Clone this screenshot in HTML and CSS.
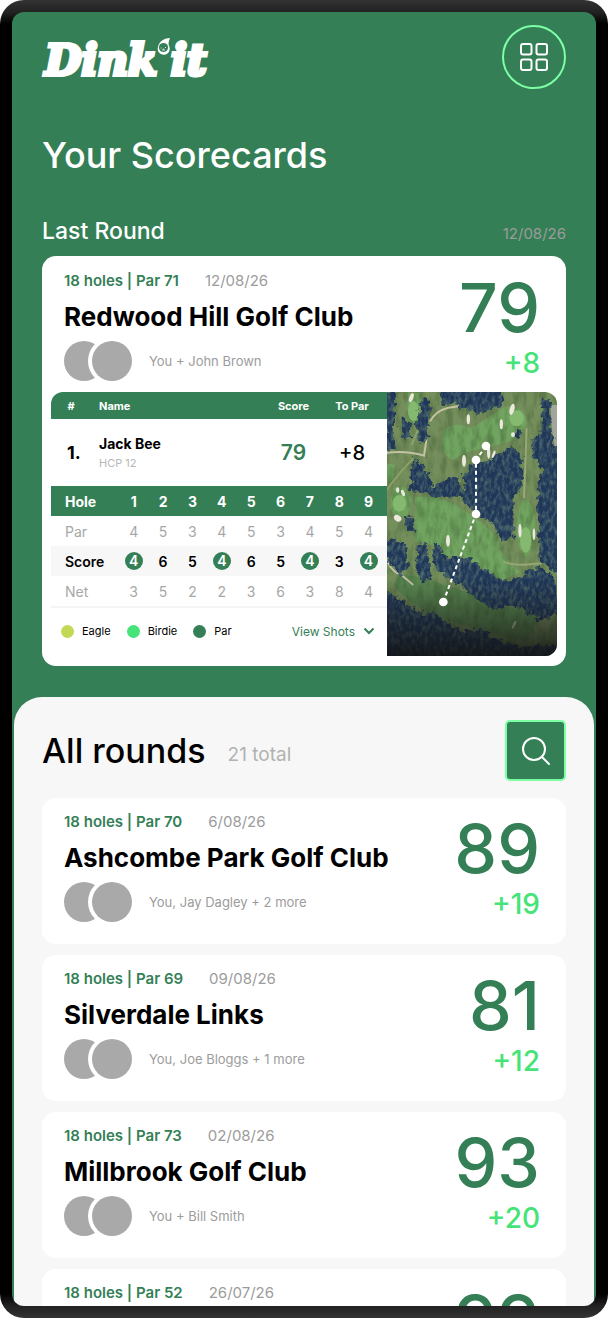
FILE: index.html
```
<!DOCTYPE html>
<html lang="en">
<head>
    <meta charset="UTF-8">
    <meta name="viewport" content="width=device-width, initial-scale=1.0">
    <title>Dink it - Your Scorecards</title>
    <link rel="stylesheet" href="styles.css">
</head>
<body>
    <div class="device">
        <div class="screen">
            <header class="top-bar">
                <a href="#" class="logo">
                    <span>Dink</span>
                    <svg class="logo-ball" viewBox="0 0 14 18" aria-hidden="true">
                        <path d="M13 1 C8 1 2 4 1 10 A6 6 0 1 0 12 9 C11 6 12 4 13 1 Z" fill="#fff"/>
                        <circle cx="6.5" cy="10.5" r="4.6" fill="#347f56"/>
                        <path d="M4 10.5 v1 M6.5 11.5 v1 M8.5 10 v1 M5 13 h3" stroke="#fff" stroke-width="0.8" fill="none"/>
                    </svg>
                    <span>it</span>
                </a>
                <button type="button" class="menu-btn" aria-label="Menu">
                    <svg width="30" height="30" viewBox="0 0 30 30" fill="none" stroke="#fff" stroke-width="2">
                        <rect x="2" y="2" width="10.5" height="10.5" rx="2"/>
                        <rect x="17.5" y="2" width="10.5" height="10.5" rx="2"/>
                        <rect x="2" y="17.5" width="10.5" height="10.5" rx="2"/>
                        <rect x="17.5" y="17.5" width="10.5" height="10.5" rx="2"/>
                    </svg>
                </button>
            </header>

            <main>
                <h1>Your Scorecards</h1>

                <section class="last-round">
                    <div class="section-head">
                        <h2>Last Round</h2>
                        <span class="date">12/08/26</span>
                    </div>

                    <article class="card featured">
                        <div class="round">
                            <div class="round-info">
                                <p class="meta"><strong>18 holes | Par 71</strong><span class="date">12/08/26</span></p>
                                <h3>Redwood Hill Golf Club</h3>
                                <div class="players">
                                    <span class="avatar"></span><span class="avatar"></span>
                                    <span class="names">You + John Brown</span>
                                </div>
                            </div>
                            <div class="round-score">
                                <span class="total">79</span>
                                <span class="to-par">+8</span>
                            </div>
                        </div>

                        <div class="scorecard">
                            <div class="scores">
                                <table class="leaderboard">
                                    <thead>
                                        <tr><th class="pos">#</th><th class="name">Name</th><th class="score">Score</th><th class="par">To Par</th></tr>
                                    </thead>
                                    <tbody>
                                        <tr>
                                            <td class="pos">1.</td>
                                            <td class="name">Jack Bee<small>HCP 12</small></td>
                                            <td class="score">79</td>
                                            <td class="par">+8</td>
                                        </tr>
                                    </tbody>
                                </table>

                                <table class="holes">
                                    <thead>
                                        <tr><th>Hole</th><th>1</th><th>2</th><th>3</th><th>4</th><th>5</th><th>6</th><th>7</th><th>8</th><th>9</th></tr>
                                    </thead>
                                    <tbody>
                                        <tr><th>Par</th><td>4</td><td>5</td><td>3</td><td>4</td><td>5</td><td>3</td><td>4</td><td>5</td><td>4</td></tr>
                                        <tr class="played"><th>Score</th><td><b>4</b></td><td>6</td><td>5</td><td><b>4</b></td><td>6</td><td>5</td><td><b>4</b></td><td>3</td><td><b>4</b></td></tr>
                                        <tr><th>Net</th><td>3</td><td>5</td><td>2</td><td>2</td><td>3</td><td>6</td><td>3</td><td>8</td><td>4</td></tr>
                                    </tbody>
                                </table>

                                <div class="legend">
                                    <span class="key eagle">Eagle</span>
                                    <span class="key birdie">Birdie</span>
                                    <span class="key on-par">Par</span>
                                    <a href="#" class="view-shots">View Shots
                                        <svg width="12" height="8" viewBox="0 0 12 8" fill="none" stroke="currentColor" stroke-width="2"><path d="M1.5 1.5 L6 6 L10.5 1.5"/></svg>
                                    </a>
                                </div>
                            </div>

                            <!-- aerial view of the hole with the shots played -->
                            <svg class="course-map" viewBox="20 21 512 792" preserveAspectRatio="xMidYMid slice" role="img" aria-label="Shot map">
                                <defs>
                                    <filter id="trees" x="-5%" y="-5%" width="110%" height="110%" color-interpolation-filters="sRGB">
                                        <feTurbulence type="fractalNoise" baseFrequency="0.06" numOctaves="3" seed="4" result="n"/>
                                        <feDisplacementMap in="SourceGraphic" in2="n" scale="30" xChannelSelector="R" yChannelSelector="G" result="shape"/>
                                        <feTurbulence type="fractalNoise" baseFrequency="0.09 0.05" numOctaves="3" seed="9"/>
                                        <feColorMatrix values="0 0 0 0 0.34  0 0 0 0 0.46  0 0 0 0 0.44  2 0 0 0 -0.8" result="leaf"/>
                                        <feComposite in="leaf" in2="shape" operator="in" result="lit"/>
                                        <feMerge><feMergeNode in="shape"/><feMergeNode in="lit"/></feMerge>
                                    </filter>
                                    <filter id="grass" x="0" y="0" width="100%" height="100%" color-interpolation-filters="sRGB">
                                        <feTurbulence type="fractalNoise" baseFrequency="0.05 0.02" numOctaves="4" seed="2"/>
                                        <feColorMatrix values="0 0 0 0 0.25  0 0 0 0 0.36  0 0 0 0 0.2  2.4 0 0 0 -0.95"/>
                                    </filter>
                                    <linearGradient id="shade" x1="0" y1="0" x2="0" y2="1">
                                        <stop offset="0.7" stop-color="#111" stop-opacity="0"/>
                                        <stop offset="1" stop-color="#111" stop-opacity="0.85"/>
                                    </linearGradient>
                                </defs>
                                <rect x="20" y="21" width="512" height="792" fill="#758f5c"/>
                                <g fill="#70a460">
                                    <path d="M85 25 L120 25 Q125 80 110 110 Q90 125 82 95 Z"/>
                                    <path d="M190 140 Q215 105 270 130 Q340 90 375 65 Q430 55 440 110 Q430 160 370 175 L310 190 Q250 200 220 225 Q180 215 190 140 Z"/>
                                    <path d="M40 310 Q85 290 95 350 Q90 395 60 400 Q30 390 32 345 Z"/>
                                    <path d="M105 335 Q190 330 240 370 Q330 420 355 470 Q375 530 420 560 L360 590 Q290 520 190 510 Q150 465 105 470 Z"/>
                                    <path d="M425 345 Q465 340 465 430 Q460 510 435 515 Q405 480 412 400 Z"/>
                                    <path d="M20 235 L45 240 L42 280 L20 295 Z"/>
                                    <path d="M60 570 Q130 570 190 600 Q280 620 340 670 Q440 650 470 710 L440 770 Q300 740 190 700 Q100 670 40 600 Z" fill="#5c8a53"/>
                                </g>
                                <rect x="20" y="21" width="512" height="792" filter="url(#grass)" opacity="0.45"/>
                                <g fill="#85b96f">
                                    <ellipse cx="100" cy="78" rx="16" ry="30"/>
                                    <ellipse cx="410" cy="100" rx="22" ry="24"/>
                                    <ellipse cx="58" cy="355" rx="20" ry="25"/>
                                    <ellipse cx="437" cy="465" rx="17" ry="38"/>
                                    <ellipse cx="420" cy="740" rx="20" ry="16" fill="#5d8a50"/>
                                </g>
                                <g stroke="#c3c3a4" fill="none" stroke-width="6">
                                    <path d="M20 203 Q80 196 132 212 L140 160"/>
                                    <path d="M150 110 Q165 78 205 68 L245 62"/>
                                    <path d="M20 528 Q40 565 62 568 L100 600"/>
                                    <path d="M20 315 Q60 260 100 220 M95 180 L120 120" stroke="#8ba16a"/>
                                    <path d="M370 530 Q400 545 485 535 M440 130 L432 340" stroke="#96a876"/>
                                </g>
                                <path d="M512 60 L532 60 L532 210 Q515 170 512 60 Z" fill="#a3a49a"/>
                                <g fill="#20375a" filter="url(#trees)">
                                    <path d="M10 20 H45 V190 L20 195 Z"/>
                                    <path d="M125 45 L150 40 L145 160 L115 175 L108 120 Z"/>
                                    <path d="M65 90 L95 120 L90 165 L65 155 Z"/>
                                    <path d="M175 10 H365 L370 55 L310 85 L250 75 L225 55 L190 60 Z"/>
                                    <path d="M100 215 L145 260 L160 305 L235 270 L250 340 L165 335 L90 315 Z"/>
                                    <path d="M275 235 L325 225 L400 185 L428 215 L425 300 L400 345 L400 460 L365 470 L340 420 L290 385 L250 350 L250 270 Z"/>
                                    <path d="M410 130 l14 8 l-4 22 l-16 -5 Z"/>
                                    <path d="M485 40 L510 45 L512 140 L540 210 L540 570 L480 530 L470 340 L485 250 L455 215 L455 165 L485 145 Z"/>
                                    <path d="M78 400 L100 398 L104 440 L82 448 Z"/>
                                    <path d="M20 460 L75 475 L85 550 L60 570 L20 525 Z"/>
                                    <path d="M110 475 L140 480 L155 585 L130 590 L110 560 Z"/>
                                    <path d="M155 475 L178 485 L200 515 L270 520 L320 560 L370 590 L430 570 L475 545 L520 570 L540 690 L480 705 L440 680 L395 655 L350 680 L290 640 L240 600 L195 570 L165 545 Z"/>
                                    <path d="M10 615 L60 640 L130 690 L160 680 L210 720 L260 740 L300 730 L330 755 L420 785 L540 780 L540 830 L10 830 Z"/>
                                </g>
                                <g fill="#ece9dc">
                                    <ellipse cx="94" cy="38" rx="6" ry="14" transform="rotate(20 94 38)"/>
                                    <ellipse cx="265" cy="103" rx="5" ry="15"/>
                                    <ellipse cx="396" cy="73" rx="7" ry="17" transform="rotate(15 396 73)"/>
                                    <ellipse cx="364" cy="118" rx="5" ry="15"/>
                                    <ellipse cx="399" cy="149" rx="6" ry="7"/>
                                    <ellipse cx="252" cy="227" rx="6" ry="18"/>
                                    <ellipse cx="326" cy="203" rx="5" ry="18"/>
                                    <ellipse cx="341" cy="208" rx="4" ry="12" transform="rotate(20 341 208)"/>
                                    <ellipse cx="53" cy="315" rx="5" ry="8"/>
                                    <ellipse cx="69" cy="324" rx="5" ry="10" transform="rotate(-20 69 324)"/>
                                    <ellipse cx="53" cy="400" rx="12" ry="9" transform="rotate(30 53 400)"/>
                                    <ellipse cx="204" cy="467" rx="6" ry="18"/>
                                    <ellipse cx="420" cy="437" rx="5" ry="21"/>
                                    <ellipse cx="462" cy="448" rx="4" ry="18"/>
                                    <ellipse cx="402" cy="720" rx="4" ry="13" transform="rotate(25 402 720)" opacity="0.6"/>
                                </g>
                                <rect x="20" y="21" width="512" height="792" fill="url(#shade)"/>
                                <path d="M190 651 L288 387 L288 225 L318 183" fill="none" stroke="#fff" stroke-width="6" stroke-dasharray="12 9"/>
                                <g fill="#fff">
                                    <circle cx="318" cy="183" r="13"/>
                                    <circle cx="288" cy="225" r="13"/>
                                    <circle cx="288" cy="387" r="13"/>
                                    <circle cx="190" cy="651" r="13"/>
                                </g>
                            </svg>
                        </div>
                    </article>
                </section>

                <section class="all-rounds">
                    <div class="all-head">
                        <h2>All rounds</h2>
                        <span class="count">21 total</span>
                        <button type="button" class="search-btn" aria-label="Search rounds">
                            <svg width="30" height="30" viewBox="0 0 30 30" fill="none" stroke="#fff" stroke-width="2" stroke-linecap="round">
                                <circle cx="13" cy="13" r="11"/>
                                <path d="M21 21 L28 28"/>
                            </svg>
                        </button>
                    </div>

                    <article class="card round">
                        <div class="round-info">
                            <p class="meta"><strong>18 holes | Par 70</strong><span class="date">6/08/26</span></p>
                            <h3>Ashcombe Park Golf Club</h3>
                            <div class="players">
                                <span class="avatar"></span><span class="avatar"></span>
                                <span class="names">You, Jay Dagley + 2 more</span>
                            </div>
                        </div>
                        <div class="round-score">
                            <span class="total">89</span>
                            <span class="to-par">+19</span>
                        </div>
                    </article>

                    <article class="card round">
                        <div class="round-info">
                            <p class="meta"><strong>18 holes | Par 69</strong><span class="date">09/08/26</span></p>
                            <h3>Silverdale Links</h3>
                            <div class="players">
                                <span class="avatar"></span><span class="avatar"></span>
                                <span class="names">You, Joe Bloggs + 1 more</span>
                            </div>
                        </div>
                        <div class="round-score">
                            <span class="total">81</span>
                            <span class="to-par">+12</span>
                        </div>
                    </article>

                    <article class="card round">
                        <div class="round-info">
                            <p class="meta"><strong>18 holes | Par 73</strong><span class="date">02/08/26</span></p>
                            <h3>Millbrook Golf Club</h3>
                            <div class="players">
                                <span class="avatar"></span><span class="avatar"></span>
                                <span class="names">You + Bill Smith</span>
                            </div>
                        </div>
                        <div class="round-score">
                            <span class="total">93</span>
                            <span class="to-par">+20</span>
                        </div>
                    </article>

                    <article class="card round">
                        <div class="round-info">
                            <p class="meta"><strong>18 holes | Par 52</strong><span class="date">26/07/26</span></p>
                        </div>
                        <div class="round-score">
                            <span class="total">99</span>
                        </div>
                    </article>
                </section>
            </main>
        </div>
    </div>
</body>
</html>
```
FILE: styles.css
```
* {
    box-sizing: border-box;
}
body {
    margin: 0;
    background: #fff;
    color: #000;
    font-family: Inter, "Liberation Sans", sans-serif;
}
h1, h2, h3, p {
    margin: 0;
}
button {
    padding: 0;
    cursor: pointer;
}
svg {
    display: block;
}

/* phone frame */
.device {
    height: 100vh;
    padding: 12px;
    border-radius: 24px;
    background: linear-gradient(#333 0, #222 12px, #000 24px, #000 calc(100% - 24px), #222 calc(100% - 12px), #333 100%);
}
.screen {
    height: 100%;
    overflow-y: auto;
    scrollbar-width: none;
    border-radius: 12px;
    background: #347f56;
}

/* header */
.top-bar {
    display: flex;
    justify-content: space-between;
    align-items: center;
    padding: 13px 30px 0;
}
.logo {
    display: flex;
    padding: 8px 0 0 3px;
    color: #fff;
    font-family: "DejaVu Serif", serif;
    font-size: 42px;
    font-weight: bold;
    font-style: italic;
    line-height: 48px;
    text-decoration: none;
    -webkit-text-stroke: 4px #fff;
    paint-order: stroke;
}
.logo-ball {
    width: 14px;
    height: 18px;
}
.menu-btn {
    display: flex;
    justify-content: center;
    align-items: center;
    width: 64px;
    height: 64px;
    border: 2px solid #7dffa6;
    border-radius: 50%;
    background: none;
}
h1 {
    margin-top: 46px;
    padding: 0 30px;
    color: #fff;
    font-size: 36px;
    font-weight: 500;
    line-height: 40px;
}
.last-round {
    padding: 42px 30px 0;
}
.section-head {
    display: flex;
    justify-content: space-between;
    align-items: baseline;
    margin-bottom: 11px;
    color: #fff;
}
.section-head h2 {
    font-size: 23px;
    font-weight: 500;
    line-height: 28px;
}
.date {
    color: #9c9c9c;
    font-size: 15px;
    font-weight: 400;
}

/* round cards */
.card {
    border-radius: 14px;
    background: #fff;
}
.round {
    display: flex;
    justify-content: space-between;
    padding: 14px 26px 0 22px;
}
.meta {
    display: flex;
    gap: 26px;
    font-size: 15px;
    line-height: 20px;
}
.meta strong {
    color: #347f56;
    font-weight: 600;
}
h3 {
    margin-top: 10px;
    font-size: 26px;
    font-weight: 700;
    line-height: 32px;
}
.players {
    display: flex;
    align-items: center;
    margin-top: 8px;
}
.avatar {
    width: 40px;
    height: 40px;
    border-radius: 50%;
    background: #a9a9a9;
}
.avatar + .avatar {
    margin-left: -12px;
    box-shadow: 0 0 0 4px #fff;
}
.names {
    margin-left: 17px;
    color: #9c9c9c;
    font-size: 13px;
    font-weight: 400;
}
.round-score {
    display: flex;
    flex-direction: column;
    align-items: flex-end;
}
.total {
    color: #347f56;
    font-size: 68px;
    font-weight: 500;
    line-height: 72px;
}
.to-par {
    color: #45e378;
    font-size: 28px;
    font-weight: 500;
    line-height: 40px;
}

/* last round scorecard */
.featured {
    padding-bottom: 10px;
}
.featured .round {
    padding-top: 15px;
}
.scorecard {
    display: grid;
    grid-template-columns: 336fr 170fr;
    margin: 9px 9px 0;
    overflow: hidden;
    border-radius: 12px;
}
.course-map {
    width: 100%;
    height: 264px;
}
table {
    width: 100%;
    border-collapse: collapse;
    table-layout: fixed;
}
th, td {
    padding: 0;
    text-align: center;
}
thead {
    background: #347f56;
    color: #fff;
}
.leaderboard th {
    height: 27px;
    font-size: 11px;
    font-weight: 700;
}
.leaderboard td {
    height: 67px;
    font-size: 20px;
    font-weight: 500;
}
.leaderboard .pos {
    width: 40px;
}
.leaderboard td.pos {
    padding-left: 6px;
    font-size: 18px;
    font-weight: 700;
}
.leaderboard .name {
    padding-left: 8px;
    text-align: left;
}
.leaderboard td.name {
    font-size: 14px;
    font-weight: 700;
}
.leaderboard small {
    display: block;
    margin-top: 4px;
    color: #b5b8b6;
    font-size: 11px;
    font-weight: 400;
}
.leaderboard .score {
    width: 59px;
}
.leaderboard td.score {
    color: #347f56;
    font-size: 21px;
    font-weight: 600;
}
.leaderboard .par {
    width: 64px;
    padding-right: 6px;
}
.holes th, .holes td {
    height: 30px;
    font-size: 14px;
}
.holes th:first-child {
    width: 68px;
    padding-left: 14px;
    text-align: left;
}
.holes tr > :last-child {
    width: 33px;
    padding-right: 4px;
}
.holes tbody th, .holes tbody td {
    color: #a6a8a7;
    font-weight: 400;
}
.holes .played {
    background: #f7f7f7;
}
.holes .played th, .holes .played td {
    color: #000;
    font-weight: 600;
}
.holes b {
    display: block;
    width: 18px;
    margin: 0 auto;
    border-radius: 50%;
    background: #347f56;
    color: #fff;
    font-weight: 600;
    line-height: 18px;
}
.legend {
    display: flex;
    align-items: center;
    gap: 16px;
    height: 48px;
    padding: 0 12px 0 10px;
    border-top: 2px solid #f5f5f5;
}
.key {
    display: flex;
    align-items: center;
    gap: 8px;
    font-size: 11px;
}
.key::before {
    content: "";
    width: 13px;
    height: 13px;
    border-radius: 50%;
}
.eagle::before {
    background: #c3d855;
}
.birdie::before {
    background: #45e378;
}
.on-par::before {
    background: #347f56;
}
.view-shots {
    display: flex;
    align-items: center;
    gap: 8px;
    margin-left: auto;
    color: #347f56;
    font-size: 12px;
    text-decoration: none;
}

/* all rounds */
.all-rounds {
    display: flex;
    flex-direction: column;
    gap: 11px;
    margin: 31px 2px 0;
    padding: 23px 28px 30px;
    border-radius: 28px 28px 0 0;
    background: #f7f7f7;
}
.all-head {
    display: flex;
    align-items: center;
    margin-bottom: 6px;
}
.all-head h2 {
    font-size: 34px;
    font-weight: 500;
    line-height: 40px;
}
.count {
    margin: 8px 0 0 22px;
    color: #b0b3b1;
    font-size: 19px;
    font-weight: 400;
}
.search-btn {
    display: flex;
    justify-content: center;
    align-items: center;
    width: 61px;
    height: 61px;
    margin-left: auto;
    border: 2px solid #7dffa6;
    border-radius: 5px;
    background: #347f56;
}
.all-rounds .round {
    min-height: 146px;
}
```
